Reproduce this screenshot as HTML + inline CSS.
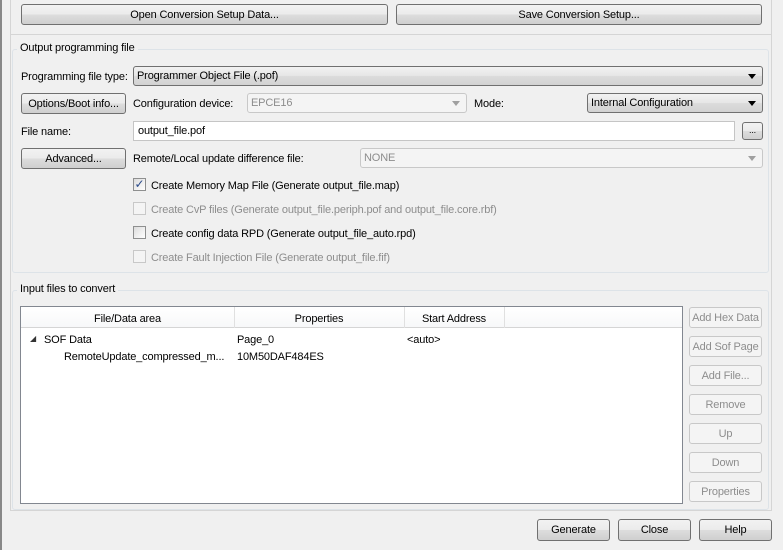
<!DOCTYPE html>
<html><head><style>
*{box-sizing:border-box;margin:0;padding:0}
body{width:783px;height:550px;background:#f0f0f0;font-family:"Liberation Sans",sans-serif;font-size:11px;letter-spacing:-0.15px;color:#000;position:relative;overflow:hidden}
.a{position:absolute}
.btn{position:absolute;border:1px solid #707070;border-radius:3px;background:linear-gradient(#f2f2f2,#ebebeb 50%,#dddddd 51%,#cfcfcf);text-align:center;line-height:20px;font-size:11px}
.dis{border-color:#c8c8c8;background:#f4f4f4;color:#8d8d8d}
.combo{position:absolute;border:1px solid #707070;border-radius:3px;background:linear-gradient(#f2f2f2,#e6e6e6 50%,#dcdcdc 51%,#d2d2d2);padding-left:3px;line-height:19px}
.combo.d{border-color:#c8c8c8;background:#f4f4f4;color:#8d8d8d}
.arr{position:absolute;right:6px;top:7px;width:0;height:0;border-left:4px solid transparent;border-right:4px solid transparent;border-top:5px solid #000}
.d .arr{border-top-color:#a0a0a0}
.grp{position:absolute;border:1px solid #dde3e8;border-radius:3px}
.gl{position:absolute;background:#f0f0f0;padding:0 3px;top:-8px;left:4px}
.cb{position:absolute;width:13px;height:13px;border:1px solid #8e8f8f;background:linear-gradient(135deg,#dcdcdc,#fff)}
.cbd{border-color:#c8c8c8;background:#f4f4f4}
.gray{color:#8d8d8d}
</style></head><body>
<div class="a" style="left:0;top:0;width:2px;height:550px;background:#888"></div>
<div class="a" style="left:10px;top:0;width:762px;height:511px;border:1px solid #d5d5d5;border-top:none"></div>
<div class="a" style="left:10px;top:34px;width:762px;height:1px;background:#d5d5d5"></div>
<div class="btn" style="left:21px;top:4px;width:367px;height:21px">Open Conversion Setup Data...</div>
<div class="btn" style="left:396px;top:4px;width:366px;height:21px">Save Conversion Setup...</div>

<div class="grp" style="left:12px;top:49px;width:757px;height:224px"><span class="gl">Output programming file</span></div>
<div class="a" style="left:21px;top:71px">Programming file type:</div>
<div class="combo" style="left:133px;top:66px;width:630px;height:20px">Programmer Object File (.pof)<span class="arr"></span></div>
<div class="btn" style="left:21px;top:93px;width:105px;height:21px">Options/Boot info...</div>
<div class="a" style="left:133px;top:98px">Configuration device:</div>
<div class="combo d" style="left:247px;top:93px;width:220px;height:20px">EPCE16<span class="arr"></span></div>
<div class="a" style="left:474px;top:98px">Mode:</div>
<div class="combo" style="left:587px;top:93px;width:176px;height:20px">Internal Configuration<span class="arr"></span></div>
<div class="a" style="left:21px;top:126px">File name:</div>
<div class="a" style="left:133px;top:121px;width:602px;height:20px;border:1px solid #c5c5c5;background:#fff;padding-left:4px;line-height:19px">output_file.pof</div>
<div class="btn" style="left:742px;top:122px;width:21px;height:18px;line-height:14px;font-size:9px">...</div>
<div class="btn" style="left:21px;top:148px;width:105px;height:21px">Advanced...</div>
<div class="a" style="left:133px;top:153px">Remote/Local update difference file:</div>
<div class="combo d" style="left:360px;top:148px;width:403px;height:20px">NONE<span class="arr"></span></div>

<div class="cb" style="left:133px;top:178px;text-align:center;line-height:11px;color:#2a4a8a;font-size:12px">✓</div>
<div class="a" style="left:151px;top:180px">Create Memory Map File (Generate output_file.map)</div>
<div class="cb cbd" style="left:133px;top:202px"></div>
<div class="a gray" style="left:151px;top:204px">Create CvP files (Generate output_file.periph.pof and output_file.core.rbf)</div>
<div class="cb" style="left:133px;top:226px"></div>
<div class="a" style="left:151px;top:228px">Create config data RPD (Generate output_file_auto.rpd)</div>
<div class="cb cbd" style="left:133px;top:250px"></div>
<div class="a gray" style="left:151px;top:252px">Create Fault Injection File (Generate output_file.fif)</div>

<div class="grp" style="left:12px;top:290px;width:757px;height:220px"><span class="gl">Input files to convert</span></div>
<div class="a" style="left:20px;top:306px;width:663px;height:198px;border:1px solid #828790;background:#fff">
 <div class="a" style="left:0;top:0;width:661px;height:21px;border-bottom:1px solid #d5d5d5;background:linear-gradient(#fff,#f7f8f9)"></div>
 <div class="a" style="left:0;top:6px;width:213px;text-align:center">File/Data area</div>
 <div class="a" style="left:213px;top:0;width:1px;height:21px;background:#e0e0e0"></div>
 <div class="a" style="left:213px;top:6px;width:170px;text-align:center">Properties</div>
 <div class="a" style="left:383px;top:0;width:1px;height:21px;background:#e0e0e0"></div>
 <div class="a" style="left:383px;top:6px;width:100px;text-align:center">Start Address</div>
 <div class="a" style="left:483px;top:0;width:1px;height:21px;background:#e0e0e0"></div>
 <div class="a" style="left:9px;top:27px;font-size:8px;color:#333">◢</div>
 <div class="a" style="left:23px;top:27px">SOF Data</div>
 <div class="a" style="left:216px;top:27px">Page_0</div>
 <div class="a" style="left:386px;top:27px">&lt;auto&gt;</div>
 <div class="a" style="left:43px;top:44px">RemoteUpdate_compressed_m...</div>
 <div class="a" style="left:216px;top:44px">10M50DAF484ES</div>
</div>
<div class="btn dis" style="left:689px;top:307px;width:73px;height:21px">Add Hex Data</div>
<div class="btn dis" style="left:689px;top:336px;width:73px;height:21px">Add Sof Page</div>
<div class="btn dis" style="left:689px;top:365px;width:73px;height:21px">Add File...</div>
<div class="btn dis" style="left:689px;top:394px;width:73px;height:21px">Remove</div>
<div class="btn dis" style="left:689px;top:423px;width:73px;height:21px">Up</div>
<div class="btn dis" style="left:689px;top:452px;width:73px;height:21px">Down</div>
<div class="btn dis" style="left:689px;top:481px;width:73px;height:21px">Properties</div>

<div class="btn" style="left:537px;top:519px;width:73px;height:22px;line-height:21px">Generate</div>
<div class="btn" style="left:618px;top:519px;width:73px;height:22px;line-height:21px">Close</div>
<div class="btn" style="left:699px;top:519px;width:73px;height:22px;line-height:21px">Help</div>
</body></html>
